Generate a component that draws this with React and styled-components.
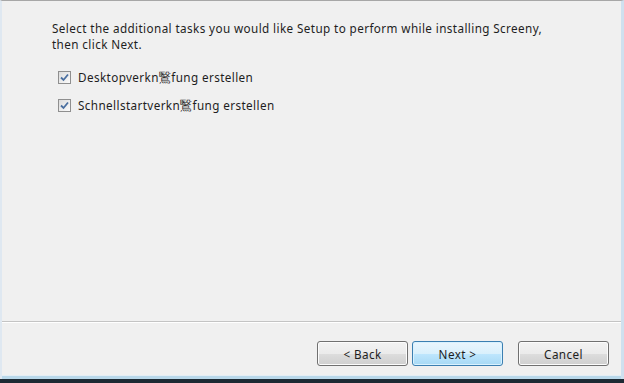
import React from "react";
import styled, { createGlobalStyle } from "styled-components";

const GlobalStyle = createGlobalStyle`
  html, body {
    margin: 0;
    padding: 0;
    background: #f0f0f0;
  }
`;

const Window = styled.div`
  width: 624px;
  height: 383px;
  box-sizing: border-box;
  display: flex;
  flex-direction: column;
  background: #f0f0f0;
  border-top: 1px solid #a7a7a7;
  border-left: 2px solid #dfe8f1;
  border-right: 3px solid #cfe0ef;
  font-family: "Noto Sans", "Open Sans", sans-serif;
  font-size: 11.7px;
  letter-spacing: 0.4px;
  color: #1e1e1e;
`;

const Content = styled.div`
  flex: 1;
  padding: 19px 0 0 50px;
`;

const Intro = styled.p`
  margin: 0;
  line-height: 16px;
`;

const TaskList = styled.div`
  margin-top: 17px;
  display: flex;
  flex-direction: column;
  gap: 12px;
`;

const TaskRow = styled.label`
  display: flex;
  align-items: center;
  gap: 7px;
  padding-left: 6px;
  height: 16px;
`;

const Box = styled.span`
  width: 13px;
  height: 13px;
  box-sizing: border-box;
  border: 1px solid #8f8f8f;
  background: linear-gradient(135deg, #dcdcdc, #fbfbfb);
  display: flex;
  align-items: center;
  justify-content: center;
`;

const Separator = styled.div`
  height: 2px;
  border-top: 1px solid #c4c4c4;
  background: #ffffff;
  box-sizing: border-box;
`;

const Footer = styled.div`
  height: 56px;
  display: flex;
  justify-content: flex-end;
  align-items: flex-start;
  padding: 18px 12px 0 0;
  box-sizing: border-box;
  border-bottom: 3px solid #b9d8ea;
  box-shadow: inset 0 -1px 0 #e4eef5;
`;

const BottomEdge = styled.div`
  height: 4px;
  background: #1d2933;
  margin: 0 -3px 0 -2px;
`;

const Button = styled.button`
  width: 91px;
  height: 25px;
  margin-left: ${(p) => (p.$gap ? 15 : 4)}px;
  box-sizing: border-box;
  border-radius: 3px;
  font-family: inherit;
  font-size: 11.7px;
  letter-spacing: 0.4px;
  color: #1e1e1e;
  padding: 0;
  border: 1px solid ${(p) => (p.$primary ? "#3c7fb1" : "#707070")};
  background: ${(p) =>
    p.$primary
      ? "linear-gradient(#eaf6fd 0%, #d9f0fc 50%, #bee6fd 51%, #a7d9f5 100%)"
      : "linear-gradient(#f2f2f2 0%, #ebebeb 50%, #dddddd 51%, #cfcfcf 100%)"};
  box-shadow: inset 0 0 0 1px ${(p) => (p.$primary ? "#d9f2ff" : "#fcfcfc")};
  &:first-child {
    margin-left: 0;
  }
`;

const Check = () => (
  <svg width="9" height="9" viewBox="0 0 9 9">
    <path d="M1 4.5 L3.5 7 L8 1.5" fill="none" stroke="#4a6fa0" strokeWidth="1.8" />
  </svg>
);

const tasks = ["Desktopverkn鷖fung erstellen", "Schnellstartverkn鷖fung erstellen"];

export default function App() {
  return (
    <>
      <GlobalStyle />
      <Window>
        <Content>
          <Intro>
            Select the additional tasks you would like Setup to perform while installing Screeny,
            <br />
            then click Next.
          </Intro>
          <TaskList>
            {tasks.map((t) => (
              <TaskRow key={t}>
                <Box>
                  <Check />
                </Box>
                <span>{t}</span>
              </TaskRow>
            ))}
          </TaskList>
        </Content>
        <Separator />
        <Footer>
          <Button>&lt; Back</Button>
          <Button $primary>Next &gt;</Button>
          <Button $gap>Cancel</Button>
        </Footer>
        <BottomEdge />
      </Window>
    </>
  );
}
